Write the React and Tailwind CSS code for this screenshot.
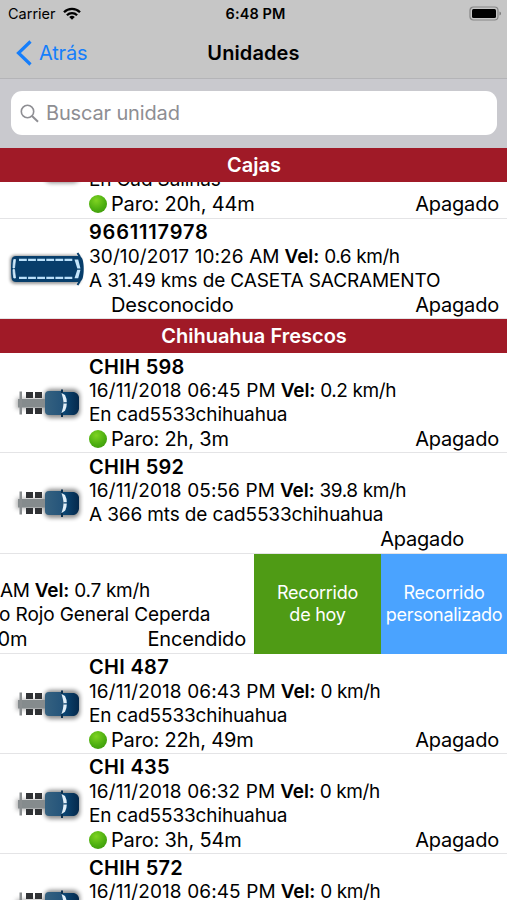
import React from "react";

const cajas = [
  {
    name: "",
    date: "",
    speed: "",
    place: "En Cad Salinas",
    stop: "Paro: 20h, 44m",
    dot: true,
    engine: "Apagado",
    vehicle: "truck",
  },
  {
    name: "9661117978",
    date: "30/10/2017 10:26 AM",
    speed: "0.6 km/h",
    place: "A 31.49 kms de CASETA SACRAMENTO",
    stop: "Desconocido",
    engine: "Apagado",
    vehicle: "bus",
  },
];

const frescosTop = [
  {
    name: "CHIH 598",
    date: "16/11/2018 06:45 PM",
    speed: "0.2 km/h",
    place: "En cad5533chihuahua",
    stop: "Paro: 2h, 3m",
    dot: true,
    engine: "Apagado",
    vehicle: "truck",
  },
  {
    name: "CHIH 592",
    date: "16/11/2018 05:56 PM",
    speed: "39.8 km/h",
    place: "A 366 mts de cad5533chihuahua",
    stop: "",
    engine: "Apagado",
    vehicle: "truck",
    inset: true,
  },
];

const frescosBottom = [
  {
    name: "CHI 487",
    date: "16/11/2018 06:43 PM",
    speed: "0 km/h",
    place: "En cad5533chihuahua",
    stop: "Paro: 22h, 49m",
    dot: true,
    engine: "Apagado",
    vehicle: "truck",
  },
  {
    name: "CHI 435",
    date: "16/11/2018 06:32 PM",
    speed: "0 km/h",
    place: "En cad5533chihuahua",
    stop: "Paro: 3h, 54m",
    dot: true,
    engine: "Apagado",
    vehicle: "truck",
  },
  {
    name: "CHIH 572",
    date: "16/11/2018 06:45 PM",
    speed: "0 km/h",
    vehicle: "truck",
  },
];

const Truck = () => (
  <svg width="78" height="44" viewBox="0 0 78 44" className="block">
    <defs>
      <linearGradient id="cab" x1="0" x2="1">
        <stop offset="0" stopColor="#356180" />
        <stop offset="1" stopColor="#24547a" />
      </linearGradient>
      <linearGradient id="hood" x1="0" x2="1">
        <stop offset="0" stopColor="#0d4a78" />
        <stop offset="1" stopColor="#05294c" />
      </linearGradient>
      <filter id="soft" x="-30%" y="-30%" width="160%" height="160%">
        <feGaussianBlur stdDeviation="2" />
      </filter>
    </defs>
    <rect x="38" y="8" width="36" height="29" rx="7" fill="#000" opacity="0.45" filter="url(#soft)" />
    <rect x="10" y="17" width="30" height="11" fill="#777" opacity="0.5" filter="url(#soft)" />
    <rect x="12" y="18" width="28" height="8.500" fill="#858b8d" />
    <rect x="13.500" y="10.500" width="2.500" height="23" fill="#8b8f91" />
    <g fill="#303235">
      <rect x="20" y="11" width="7" height="6" />
      <rect x="29" y="11" width="7" height="6" />
      <rect x="20" y="27" width="7" height="6" />
      <rect x="29" y="27" width="7" height="6" />
    </g>
    <path d="M39 14q0-4 4-4h14v24H43q-4 0-4-4z" fill="url(#cab)" />
    <path d="M56 11h12q4 1 5 5v12q-1 5-5 6H56q3-12 0-23z" fill="url(#hood)" />
    <path d="M56 8.500v4M56 32v4" stroke="#0c3150" strokeWidth="2" />
    <path d="M55.500 12l3.500 2q1.800 3.500 1.800 7.200h-3.200q-.5-4-2.100-9.200zM57.600 22.500h3.200q0 3.800-1.800 7.300l-3.500 2.200q1.700-5 2.100-9.500z" fill="#e2f0fa" />
  </svg>
);

const Bus = () => (
  <svg width="78" height="44" viewBox="0 0 78 44" className="block">
    <defs>
      <filter id="busSoft" x="-20%" y="-30%" width="140%" height="160%">
        <feGaussianBlur stdDeviation="1.8" />
      </filter>
    </defs>
    <rect x="4" y="8" width="71" height="29" rx="5" fill="#000" opacity="0.4" filter="url(#busSoft)" />
    <path d="M10 9h62q4 0 5 5 1.500 8 0 16-1 5-5 5H10q-4 0-4.500-4-1-9 0-18 .5-4 4.500-4z" fill="#073e6b" />
    <path d="M71.500 6l2.500 4M71.500 38l2.500-4" stroke="#073e6b" strokeWidth="2" />
    <path d="M13 12.800h54M13 30.800h54" stroke="#b9e0fa" strokeWidth="2.200" strokeDasharray="7.800 1.300" />
    <path d="M9.500 12.500l-1 8.500H7q0-5 .8-8.500zM8.500 22.500l1 8.500H7.800q-.8-4-.8-8.500z" fill="#cfe9fa" stroke="#cfe9fa" strokeWidth="0.800" />
    <path d="M68.500 12.500h3.700l2.300 9h-3.200zM71.300 22.700h3.200l-2.300 8.500h-3.700z" fill="#c4e6fb" />
  </svg>
);

const Dot = () => (
  <span className="h-[18px] w-[18px] rounded-full bg-[radial-gradient(circle_at_40%_30%,#7fd321,#4cae10_55%,#38900a)]" />
);

const SectionHeader = ({ title }) => (
  <div className="flex h-[34.500px] w-full shrink-0 items-center justify-center bg-[#a01a27] pt-px pl-px text-[20px] font-semibold text-white">
    {title}
  </div>
);

const UnitRow = ({ unit }) => (
  <div className="flex h-[100.200px] w-full shrink-0 border-b border-[#e4e4e6] bg-white">
    <div className="w-[89px] shrink-0 pt-[28px] pl-[6px]">
      {unit.vehicle === "bus" ? <Bus /> : <Truck />}
    </div>
    <div className="flex min-w-0 flex-1 flex-col pt-[1.500px] whitespace-nowrap">
      <p
        className={
          /^\d+$/.test(unit.name)
            ? "h-[24.500px] text-[20px] leading-[25px] font-semibold tracking-[0.8px]"
            : "h-[24.500px] text-[20px] leading-[25px] font-semibold tracking-[0.3px]"
        }
      >
        {unit.name}
      </p>
      {unit.date && (
        <p className="h-6 text-[19px] leading-6 tracking-[-0.4px]">
          <span className="tracking-[0.1px]">{unit.date}</span>{" "}
          <b className="font-semibold tracking-[-0.1px]">Vel:</b> {unit.speed}
        </p>
      )}
      {!unit.date && <div className="h-6" />}
      {unit.place && (
        <>
          <p className="h-[23px] text-[19px] leading-[23px] tracking-[-0.13px]">{unit.place}</p>
          <div className={unit.inset ? "flex h-[26px] items-center pr-[43px]" : "flex h-[26px] items-center pr-2"}>
            <span className="flex w-[22px] shrink-0">{unit.dot && <Dot />}</span>
            <span className="text-[20px] tracking-[-0.17px]">{unit.stop}</span>
            <span className="ml-auto text-[20px] tracking-[-0.2px]">{unit.engine}</span>
          </div>
        </>
      )}
    </div>
  </div>
);

const SwipedRow = () => (
  <div className="flex h-[100.200px] w-full shrink-0 bg-white">
    <div className="flex w-[254px] flex-col overflow-hidden border-b border-[#e4e4e6] pt-[25.500px] whitespace-nowrap">
      <p className="h-6 text-[19px] leading-6 tracking-[-0.3px]">
        AM <b className="font-semibold tracking-[-0.1px]">Vel:</b> 0.7 km/h
      </p>
      <p className="-ml-px h-[23px] text-[19px] leading-[23px] tracking-[-0.1px]">o Rojo General Ceperda</p>
      <div className="flex h-[26px] items-center justify-between pr-2 text-[20px] tracking-[-0.17px]">
        <span className="-ml-[2.500px]">0m</span>
        <span>Encendido</span>
      </div>
    </div>
    <button className="w-[127px] bg-[#4f9b15] text-[18px] leading-[22px] tracking-[-0.25px] text-white">
      Recorrido
      <br />
      de hoy
    </button>
    <button className="w-[126px] bg-[#4aa3ff] text-[18px] leading-[22px] tracking-[-0.25px] text-white">
      Recorrido
      <br />
      personalizado
    </button>
  </div>
);

const StatusBar = () => (
  <div className="grid h-7 grid-cols-3 items-center pr-[5px] pl-2 text-[14.500px]">
    <div className="flex items-center gap-[7px]">
      <span>Carrier</span>
      <svg width="18" height="13" viewBox="0 0 18 13" className="-mt-px">
        <g fill="none" stroke="#000" strokeWidth="2.300">
          <path d="M1 5.200a11.300 11.300 0 0 1 16 0" />
          <path d="M3.900 8.200a7.200 7.200 0 0 1 10.200 0" />
        </g>
        <path d="M9 12.800L6.200 10a4 4 0 0 1 5.600 0z" />
      </svg>
    </div>
    <span className="pl-px text-center font-semibold tracking-[0.1px]">6:48 PM</span>
    <svg width="33" height="15" viewBox="0 0 33 15" className="-mt-px ml-auto">
      <rect x="1" y="1" width="28" height="13" rx="3.500" fill="none" stroke="#858585" strokeWidth="1.200" />
      <rect x="3" y="3" width="24" height="9" rx="1.500" />
      <path d="M30.500 5.500q1.500 .5 1.500 2t-1.500 2z" fill="#777" />
    </svg>
  </div>
);

const App = () => {
  return (
    <div className="flex h-[900px] w-[507px] flex-col overflow-hidden bg-white font-['Inter',sans-serif] text-black">
      <header className="h-[79px] shrink-0 border-b border-[#b4b4b7] bg-[#c6c6c6]">
        <StatusBar />
        <div className="grid h-[49px] grid-cols-3 items-center px-4">
          <div className="flex items-center gap-[7px] text-[20px] text-[#157efb]">
            <svg width="16" height="26" viewBox="0 0 16 26" fill="none" stroke="currentColor" strokeWidth="3.200">
              <path d="M14.500 1.500L2.500 13l12 11.500" />
            </svg>
            <span className="tracking-[-0.2px]">Atrás</span>
          </div>
          <h1 className="text-center text-[20px] font-semibold tracking-[0.1px]">Unidades</h1>
        </div>
      </header>
      <div className="h-[68.500px] shrink-0 bg-[#c9c9ce] pt-3 pr-[10px] pl-[11px]">
        <div className="flex h-[44px] items-center gap-[7px] rounded-[11px] bg-white pl-[9px] text-[20px] text-[#8e8e93]">
          <svg width="19" height="19" viewBox="0 0 19 19" fill="none" stroke="currentColor" strokeWidth="1.600">
            <circle cx="7.500" cy="7.500" r="6.200" />
            <path d="M12 12l6 5.800" strokeWidth="2" />
          </svg>
          <span className="tracking-[-0.15px]">Buscar unidad</span>
        </div>
      </div>
      <SectionHeader title="Cajas" />
      {/* first row is scrolled under the sticky section header */}
      <div className="flex h-[36.500px] shrink-0 flex-col justify-end overflow-hidden">
        <UnitRow unit={cajas[0]} />
      </div>
      <UnitRow unit={cajas[1]} />
      <SectionHeader title="Chihuahua Frescos" />
      {frescosTop.map((unit) => (
        <UnitRow key={unit.name} unit={unit} />
      ))}
      <SwipedRow />
      {frescosBottom.map((unit) => (
        <UnitRow key={unit.name} unit={unit} />
      ))}
    </div>
  );
};

export default App;
